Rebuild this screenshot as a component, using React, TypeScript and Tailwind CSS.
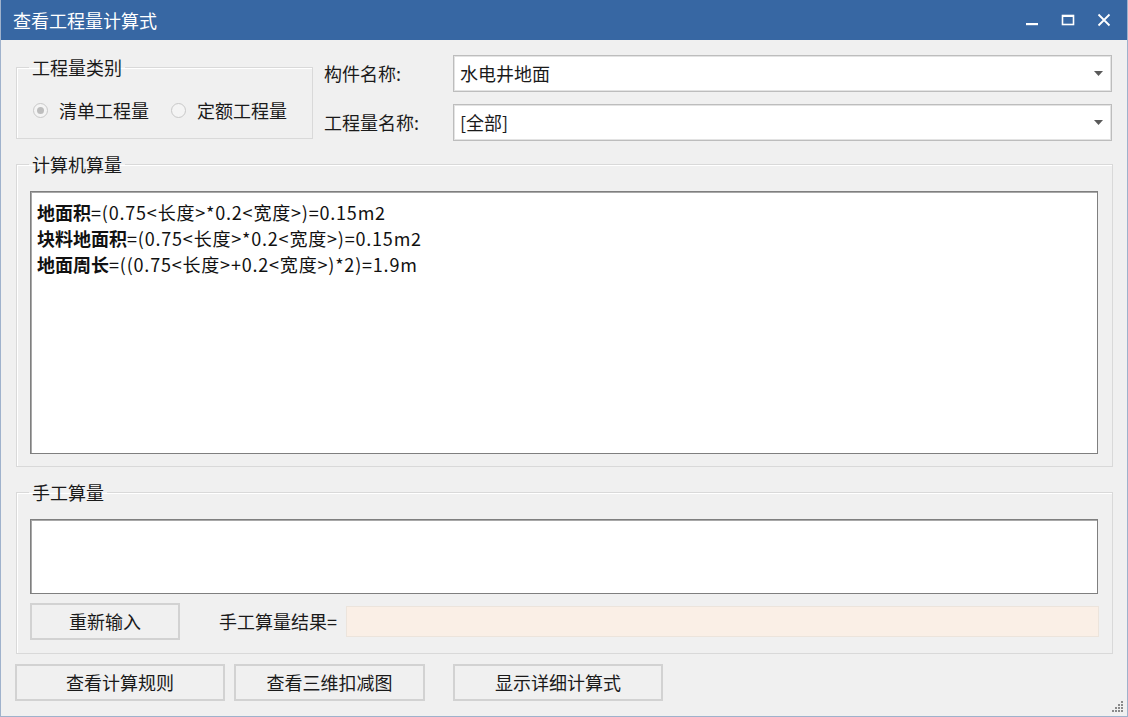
import React from 'react'

const FONT = "font-['Microsoft_YaHei','Noto_Sans_CJK_SC','Noto_Sans',sans-serif]"

function Arrow() {
  return (
    <svg width="9" height="5" viewBox="0 0 9 5" className="shrink-0">
      <path d="M0 0 H9 L4.5 5 Z" fill="#5a5a5a" />
    </svg>
  )
}

function Combo({ value }: { value: string }) {
  return (
    <div className="flex h-[37px] w-[659px] items-center justify-between border border-[#bdbdbd] bg-white pl-[6px] pr-[8px] shadow-[inset_0_0_0_1px_#e3e3e3]">
      <span className="text-[18px] text-[#1a1a1a]">{value}</span>
      <Arrow />
    </div>
  )
}

function Radio({ checked, label }: { checked?: boolean; label: string }) {
  return (
    <div className="flex items-center gap-[11px]">
      <span className="flex h-[15px] w-[15px] items-center justify-center rounded-full border border-[#c8c8c8] bg-[#f4f4f4]">
        {checked && <span className="h-[7px] w-[7px] rounded-full bg-[#bdbdbd]" />}
      </span>
      <span className="text-[18px] text-[#1a1a1a]">{label}</span>
    </div>
  )
}

function Btn({ w, label }: { w: string; label: string }) {
  return (
    <div className={`flex h-[37px] ${w} items-center justify-center border-2 border-[#d2d2d2] bg-[#f0f0f0] text-[18px] text-[#1a1a1a]`}>
      {label}
    </div>
  )
}

const lines = [
  { b: '地面积', r: '=(0.75<长度>*0.2<宽度>)=0.15m2' },
  { b: '块料地面积', r: '=(0.75<长度>*0.2<宽度>)=0.15m2' },
  { b: '地面周长', r: '=((0.75<长度>+0.2<宽度>)*2)=1.9m' },
]

export default function App() {
  return (
    <div className={`relative flex h-[717px] w-[1128px] flex-col border-x border-b border-[#9fb2cc] bg-[#f0f0f0] ${FONT}`}>
      {/* title bar */}
      <div className="flex h-[40px] shrink-0 items-center justify-between bg-[#3767a3] pl-[12px] pr-[16px] text-white">
        <span className="text-[18px]">查看工程量计算式</span>
        <div className="flex items-center gap-[22px]">
          <svg width="14" height="14" viewBox="0 0 14 14">
            <rect x="1" y="10" width="12" height="2.2" fill="white" />
          </svg>
          <svg width="14" height="14" viewBox="0 0 14 14">
            <rect x="1.5" y="2.5" width="11" height="9" fill="none" stroke="white" strokeWidth="1.6" />
            <rect x="1.5" y="2" width="11" height="2" fill="white" />
          </svg>
          <svg width="14" height="14" viewBox="0 0 14 14">
            <path d="M1.5 1.5 L12.5 12.5 M12.5 1.5 L1.5 12.5" stroke="white" strokeWidth="1.8" />
          </svg>
        </div>
      </div>

      {/* top row */}
      <div className="mt-[15px] flex items-start">
        <fieldset className="ml-[15px] h-[84px] w-[297px] border border-[#d9d9d9] px-[14px] shadow-[inset_1px_1px_0_white]">
          <legend className="ml-[-2px] px-[3px] text-[18px] leading-[24px] text-[#1a1a1a]">工程量类别</legend>
          <div className="mt-[18px] flex items-center gap-[22px] pl-[2px]">
            <Radio checked label="清单工程量" />
            <Radio label="定额工程量" />
          </div>
        </fieldset>
        <div className="ml-[11px] flex flex-col gap-[12px]">
          <div className="flex items-center">
            <span className="w-[129px] text-[18px] text-[#1a1a1a]">构件名称:</span>
            <Combo value="水电井地面" />
          </div>
          <div className="flex items-center">
            <span className="w-[129px] text-[18px] text-[#1a1a1a]">工程量名称:</span>
            <Combo value="[全部]" />
          </div>
        </div>
      </div>

      {/* computer group */}
      <fieldset className="ml-[15px] mt-[11px] w-[1097px] border border-[#d9d9d9] px-[13px] pb-[12px] pt-[15px] shadow-[inset_1px_1px_0_white]">
        <legend className="ml-[-1px] px-[3px] text-[18px] leading-[24px] text-[#1a1a1a]">计算机算量</legend>
        <div className="h-[263px] w-[1068px] border border-[#7f7f7f] bg-white px-[6px] pt-[7px] shadow-[inset_1px_1px_0_#a8a8a8]">
          {lines.map((l) => (
            <div key={l.b} className="text-[18px] leading-[26px] text-[#111]">
              <span className="font-bold">{l.b}</span>
              <span className="tracking-[0.8px]">{l.r}</span>
            </div>
          ))}
        </div>
      </fieldset>

      {/* manual group */}
      <fieldset className="ml-[15px] mt-[13px] w-[1097px] border border-[#d9d9d9] px-[13px] pb-[13px] pt-[15px] shadow-[inset_1px_1px_0_white]">
        <legend className="ml-[-1px] px-[3px] text-[18px] leading-[24px] text-[#1a1a1a]">手工算量</legend>
        <div className="h-[75px] w-[1068px] border border-[#7f7f7f] bg-white shadow-[inset_1px_1px_0_#a8a8a8]" />
        <div className="mt-[9px] flex items-center">
          <Btn w="w-[150px]" label="重新输入" />
          <span className="ml-[39px] text-[18px] text-[#1a1a1a]">手工算量结果=</span>
          <div className="ml-[9px] h-[31px] flex-1 border border-[#ece4dc] bg-[#faefe6]" />
        </div>
      </fieldset>

      {/* bottom buttons */}
      <div className="ml-[14px] mt-[10px] flex">
        <Btn w="w-[210px]" label="查看计算规则" />
        <div className="ml-[9px]">
          <Btn w="w-[191px]" label="查看三维扣减图" />
        </div>
        <div className="ml-[28px]">
          <Btn w="w-[210px]" label="显示详细计算式" />
        </div>
      </div>

      {/* resize grip */}
      <svg width="12" height="12" viewBox="0 0 12 12" className="absolute bottom-[3px] right-[3px]">
        {[
          [9, 1],
          [6, 4],
          [9, 4],
          [3, 7],
          [6, 7],
          [9, 7],
          [0, 10],
          [3, 10],
          [6, 10],
          [9, 10],
        ].map(([x, y]) => (
          <rect key={`${x}-${y}`} x={x} y={y - 1} width="2" height="2" fill="#8a8a8a" />
        ))}
      </svg>
    </div>
  )
}
